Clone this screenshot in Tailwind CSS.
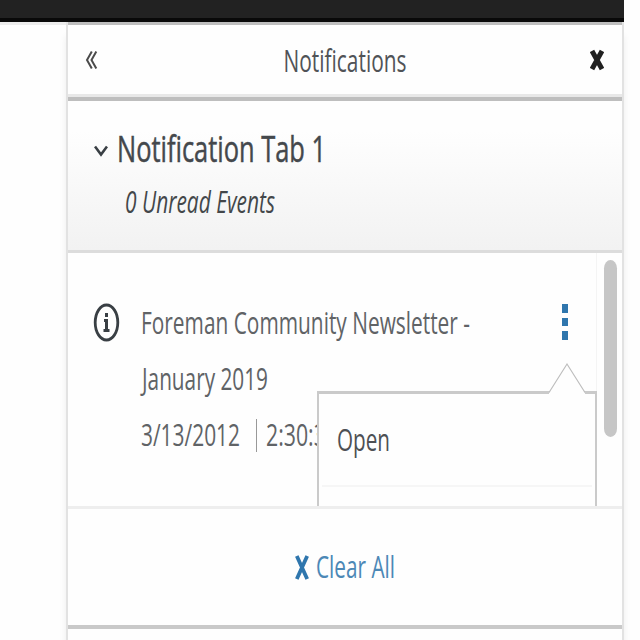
<!DOCTYPE html>
<html lang="en">
<head>
<meta charset="utf-8">
<title>Notifications</title>
<script src="https://cdn.jsdelivr.net/npm/@tailwindcss/browser@4"></script>
</head>
<body class="w-[640px] h-[640px] overflow-hidden bg-[#fefefe] font-['Open_Sans','Noto_Sans',sans-serif] text-[31.500px] text-[#505357]">
<div class="flex flex-col h-full">
  <header class="w-[624px] h-[22px] shrink-0 bg-[#222] border-b-4 border-[#090909]"></header>
  <div class="flex flex-1">
    <div class="w-[66px] border-t-[3px] border-[#ececec]"></div>
    <aside class="w-[558px] h-[618px] flex flex-col border-x-2 border-[#e2e2e2] shadow-[0_14px_7px_rgba(0,0,0,0.07)]">
      <div class="h-[79px] shrink-0 border-t-[3px] border-b-4 border-[#bebebe]">
        <div class="h-[72px] border-b-[3px] border-[#e8e8e8] flex items-center justify-between pl-[17px] pr-[18px]">
          <svg class="w-[13px] h-[20px]" viewBox="0 0 13 20" fill="none" stroke="#4b4b4b" stroke-width="2"><path d="M6.800 1.500 2 10l4.800 8.500M11.300 1.500 6.500 10l4.800 8.500"/></svg>
          <svg viewBox="0 0 124 44" class="w-[124px] h-[44px] overflow-visible"><text x="1.500" y="34" textLength="123" lengthAdjust="spacingAndGlyphs" fill="#505357">Notifications</text></svg>
          <svg class="w-[14px] h-[22px]" viewBox="0 0 14 22" fill="none" stroke="#202020" stroke-width="5"><path d="M2 2 12 20M12 2 2 20"/></svg>
        </div>
      </div>
      <div class="h-[152px] shrink-0 border-b-[3px] border-[#dcdcdc] bg-linear-to-b from-[#fefefe] from-20% to-[#f2f2f2] pt-[22px]">
        <div class="flex items-center h-[52px] pl-[26px] gap-[9px]">
          <svg class="w-[14px] h-[14px] mt-[3px]" viewBox="0 0 14 14" fill="none" stroke="#393f44" stroke-width="2.600"><path d="M1 2.500 7 10.500 13 2.500"/></svg>
          <svg viewBox="0 0 210 52" class="w-[210px] h-[52px] text-[37px] overflow-visible"><text x="0" y="39" textLength="209" lengthAdjust="spacingAndGlyphs" fill="#44484c" stroke="#44484c" stroke-width=".5">Notification Tab 1</text></svg>
        </div>
        <svg viewBox="0 0 152 52" class="w-[152px] h-[52px] ml-[57px] italic overflow-visible"><text x="0" y="38" textLength="150" lengthAdjust="spacingAndGlyphs" fill="#43474a">0 Unread Events</text></svg>
      </div>
      <div class="h-[256px] shrink-0 border-b-[3px] border-[#eee] flex overflow-hidden relative">
        <div class="flex flex-1 pt-[42px] pl-[25px]">
          <svg class="w-[27px] h-[42px] mt-[6px]" viewBox="0 0 27 42" preserveAspectRatio="none"><ellipse cx="13.500" cy="21.500" rx="11.300" ry="17.500" fill="none" stroke="#393f44" stroke-width="2.800"/><path d="M12 12h3v4h-3zM11 18h4v10h1.500v3h-6v-3H12v-7h-1z" fill="#393f44"/></svg>
          <div class="flex flex-col pl-[20px]">
            <svg viewBox="0 0 334 56" class="w-[334px] h-[56px] overflow-visible"><text x="1" y="39" textLength="329" lengthAdjust="spacingAndGlyphs" fill="#606366">Foreman Community Newsletter -</text></svg>
            <svg viewBox="0 0 334 56" class="w-[334px] h-[56px] overflow-visible"><text x="2" y="39" textLength="126" lengthAdjust="spacingAndGlyphs" fill="#606366">January 2019</text></svg>
            <div class="flex h-[56px] items-center">
              <svg viewBox="0 0 116 56" class="w-[116px] h-[56px] overflow-visible"><text x="1" y="39" textLength="99" lengthAdjust="spacingAndGlyphs" fill="#606366">3/13/2012</text></svg>
              <div class="w-px h-[33px] bg-[#999]"></div>
              <svg viewBox="0 0 110 56" class="w-[110px] h-[56px] overflow-visible"><text x="9" y="39" textLength="72" lengthAdjust="spacingAndGlyphs" fill="#606366">2:30:32</text></svg>
            </div>
          </div>
          <div class="flex flex-col gap-[5px] pt-[9px] ml-[88px]">
            <div class="w-[6px] h-[9px] bg-[#2f76ad]"></div>
            <div class="w-[6px] h-[8px] bg-[#2f76ad]"></div>
            <div class="w-[6px] h-[9px] bg-[#2f76ad]"></div>
          </div>
        </div>
        <div class="w-[26px] shrink-0 border-l border-[#f4f4f4] pt-[7px] pl-[7px]"><div class="w-[13px] h-[177px] rounded-[7px/9px] bg-[#c6c6c6]"></div></div>
        <div class="absolute left-[249px] top-[138px] w-[280px] h-[130px] bg-[#fefefe] border-t-[3px] border-x-2 border-[#cacaca]">
          <svg class="absolute left-[230px] top-[-32px] w-[36px] h-[33px]" viewBox="0 0 36 33" fill="#fefefe"><path d="M0 33V31L18 2 36 31v2z"/><path d="M0 30.500 18 2 36 30.500" fill="none" stroke="#bdbdbd" stroke-width="1.200"/></svg>
          <div class="h-[93px] mx-[3px] border-b-2 border-[#f6f6f6] pl-[14px] pt-[18px]">
            <svg viewBox="0 0 60 56" class="w-[60px] h-[56px] overflow-visible"><text x="1" y="39" textLength="53" lengthAdjust="spacingAndGlyphs" fill="#4d5054">Open</text></svg>
          </div>
        </div>
      </div>
      <div class="h-[120px] shrink-0 border-b-4 border-[#c9c9c9] flex items-center pl-[227px] gap-[7px]">
        <svg class="w-[14px] h-[25px]" viewBox="0 0 14 25" fill="none" stroke="#2f76ad" stroke-width="3.800"><path d="M1.800 1 12.200 24M12.200 1 1.800 24"/></svg>
        <svg viewBox="0 0 82 56" class="w-[82px] h-[56px] overflow-visible"><text x="0" y="39" textLength="79" lengthAdjust="spacingAndGlyphs" fill="#4c88b6">Clear All</text></svg>
      </div>
    </aside>
  </div>
</div>
</body>
</html>
